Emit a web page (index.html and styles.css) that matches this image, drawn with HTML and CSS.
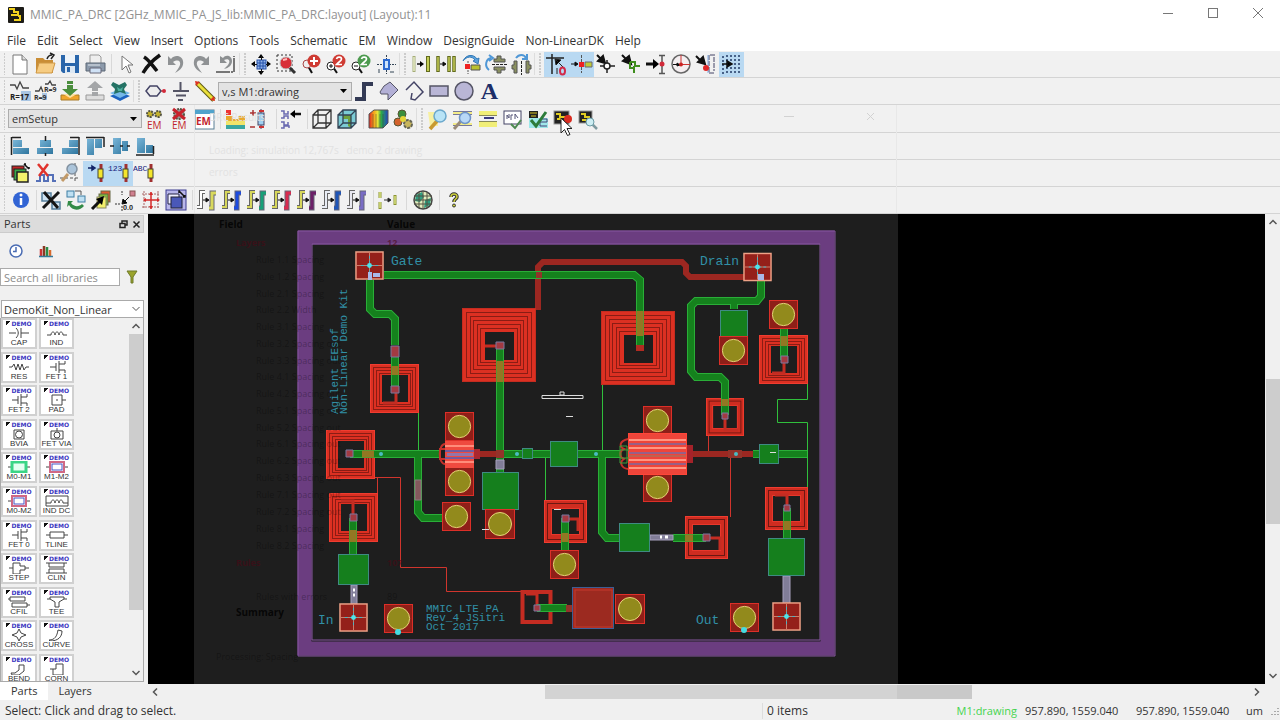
FILE: index.html
```html
<!DOCTYPE html>
<html lang="en">
<head>
<meta charset="utf-8">
<title>MMIC_PA_DRC [2GHz_MMIC_PA_JS_lib:MMIC_PA_DRC:layout] (Layout):11</title>
<link rel="stylesheet" href="styles.css">
</head>
<body>
<svg class="defs" aria-hidden="true">
<defs>
<linearGradient id="steel" x1="0" y1="0" x2="1" y2="1"><stop offset="0" stop-color="#7ab6d8"/><stop offset="1" stop-color="#2f769f"/></linearGradient>
<linearGradient id="rain"><stop offset="0" stop-color="#d22"/><stop offset=".25" stop-color="#f5a21b"/><stop offset=".45" stop-color="#e8e337"/><stop offset=".65" stop-color="#2aa84a"/><stop offset="1" stop-color="#2343c4"/></linearGradient>
<linearGradient id="navy"><stop offset="0" stop-color="#6d84c9"/><stop offset="1" stop-color="#101f58"/></linearGradient>
<symbol id="undo" viewBox="0 0 24 24"><path d="M4 4v9h8l-3-3c5-3 8-1 7 3-1 3-3 5-5 8 6-3 9-7 8-12-1-5-8-7-12-2z" fill="#8f9294"/></symbol>
<symbol id="swap" viewBox="0 0 24 24"><path d="M10 4H6v15H2" fill="none" stroke="#666" stroke-width="4"/><path d="M10 4H6v15H2" fill="none" stroke="var(--a)" stroke-width="2"/><path d="M21 5h-4v15h-3" fill="none" stroke="#667" stroke-width="5"/><path d="M21 5h-4v15h-3" fill="none" stroke="var(--b)" stroke-width="3"/><path d="M8 12h5M11 10l3 2-3 2z" stroke="#111" fill="#111"/></symbol>
<symbol id="comp" viewBox="0 0 24 24"><path d="M18 3v18" stroke="#a03030" stroke-width="3"/><rect x="15" y="8" width="5" height="9" fill="#f4e62c" stroke="#443"/></symbol>
<symbol id="bars" viewBox="0 0 24 24"><path d="M5 4v16" stroke="#a5ac78" stroke-width="3"/><path d="M19 4v16" stroke="#626b1c" stroke-width="4"/><path d="M5 5v14" stroke="#e6ebc4" stroke-width="1.500"/><path d="M19 5v14" stroke="#c3cc55" stroke-width="2"/><path d="M8 12h5" stroke="#111" stroke-width="1.500"/><path d="M11 9l4 3-4 3z"/></symbol>

<symbol id="sp74" viewBox="0 0 74 74"><path fill-rule="evenodd" d="M0 0h74v74H0zM23 24v28h29V24z" fill="#dc3022"/><g fill="none" stroke="#8a1c14" stroke-width="1"><rect x="4.500" y="4.500" width="65" height="65"/><rect x="8.500" y="8.500" width="57" height="57"/><rect x="11.500" y="12.500" width="50" height="49"/><rect x="15.500" y="16.500" width="43" height="41"/><rect x="18.500" y="20.500" width="37" height="34"/></g><rect x=".5" y=".5" width="73" height="73" fill="none" stroke="#c42c20"/></symbol>
<symbol id="sp49" viewBox="0 0 49 49"><path fill-rule="evenodd" d="M0 0h49v49H0zM12 11v27h26V11z" fill="#dc3022"/><g fill="none" stroke="#8a1c14"><rect x="3.500" y="3.500" width="42" height="42"/><rect x="6.500" y="6.500" width="36" height="36"/><rect x="9.500" y="9.500" width="31" height="31"/></g><rect x=".5" y=".5" width="48" height="48" fill="none" stroke="#f03c30"/></symbol>
<symbol id="sp43" viewBox="0 0 43 43"><path fill-rule="evenodd" d="M0 0h43v43H0zM8 9v25h27V9z" fill="#cf2c20"/><g fill="none" stroke="#6c1712"><rect x="3.500" y="3.500" width="36" height="36"/></g><rect x=".5" y=".5" width="42" height="42" fill="none" stroke="#f03c30"/><rect x="7.500" y="8.500" width="28" height="26" fill="none" stroke="#e8372b"/></symbol>
<symbol id="via" viewBox="0 0 30 30"><rect x=".5" y=".5" width="29" height="29" fill="#8f1f18" stroke="#e0302a"/><circle cx="15" cy="15" r="11.500" fill="#928a1c" stroke="#e8d67a"/></symbol>
<symbol id="pad" viewBox="0 0 30 30"><rect x="1" y="1" width="28" height="28" fill="#94201a" stroke="#efa287" stroke-width="1.500"/><path d="M15 2v26M2 15h26" stroke="#d0826e"/><path d="M15 5v20M6 15h18" stroke="#45b6c6" stroke-dasharray="3 2"/><circle cx="15" cy="15" r="2.500" fill="#4fe3ea"/></symbol>
</defs>
</svg>

<div class="window">
<header class="titlebar">
  <svg class="appicon" viewBox="0 0 16 16"><rect width="16" height="16" rx="1" fill="#1c1b17"/><path d="M1 2h5v3h5M3 8h7v-2M6 13h6V9h-2" fill="none" stroke="#f2d21f" stroke-width="2"/></svg>
  <h1>MMIC_PA_DRC [2GHz_MMIC_PA_JS_lib:MMIC_PA_DRC:layout] (Layout):11</h1>
  <button aria-label="Minimize"><svg viewBox="0 0 12 12"><path d="M1 6.500h10"/></svg></button>
  <button aria-label="Maximize"><svg viewBox="0 0 12 12"><rect x="1.500" y="1.500" width="9" height="9"/></svg></button>
  <button aria-label="Close"><svg viewBox="0 0 12 12"><path d="M1 1l10 10M11 1L1 11"/></svg></button>
</header>

<nav class="menubar">
  <button>File</button><button>Edit</button><button>Select</button><button>View</button><button>Insert</button><button>Options</button><button>Tools</button><button>Schematic</button><button>EM</button><button>Window</button><button>DesignGuide</button><button>Non-LinearDK</button><button>Help</button>
</nav>

<div class="toolbar" role="toolbar">
  <i class="grip"></i>
  <button aria-label="New"><svg viewBox="0 0 24 24"><path d="M5 3h9l5 5v14H5z" fill="#fff" stroke="#777"/><path d="M14 3v5h5" fill="#ddd" stroke="#777"/></svg></button>
  <button aria-label="Open"><svg viewBox="0 0 24 24"><path d="M3 6h7l2 2h8v13H3z" fill="#c98d35"/><path d="M6 11h16l-3 10H3z" fill="#f6cc82" stroke="#cf9845"/><path d="M14 7c1-3 3-4 5-4M17 1l4 2-3 4" fill="none" stroke="#222" stroke-width="1.500"/></svg></button>
  <button aria-label="Save"><svg viewBox="0 0 24 24"><path d="M3 3h18v18H5l-2-2z" fill="#2a66ab"/><rect x="7" y="3" width="10" height="8" fill="#eef4fa"/><rect x="7" y="14" width="10" height="7" fill="#dce8f4"/><rect x="9" y="15" width="3" height="5" fill="#2a66ab"/></svg></button>
  <button aria-label="Print"><svg viewBox="0 0 24 24"><path d="M7 3h9l2 2v7H7z" fill="#eee" stroke="#999"/><path d="M3 11h19v8H3z" fill="#8c9aab" stroke="#5b6674"/><path d="M7 16h11v5H7z" fill="#cfe1f5" stroke="#667"/><path d="M5 13h12" stroke="#dfe5ec"/></svg></button>
  <i class="sep"></i>
  <button aria-label="Select"><svg viewBox="0 0 24 24"><path d="M8 4v14l4-4 3 7 2-1-3-7h5z" fill="#fff" stroke="#777"/></svg></button>
  <button aria-label="Delete"><svg viewBox="0 0 24 24"><path d="M21 3C14 8 8 14 4 21M5 5c5 3 8 8 13 14" fill="none" stroke="#111" stroke-width="3.500"/></svg></button>
  <button aria-label="Undo"><svg><use href="#undo"/></svg></button>
  <button aria-label="Redo"><svg class="flip"><use href="#undo"/></svg></button>
  <button aria-label="Undo list"><svg viewBox="0 0 24 24"><path d="M6 4v7h7l-3-3c5-2 7 1 4 5l-4 4c5-1 8-4 8-8 0-5-6-7-9-3z" fill="#8c8f91"/><path d="M2 20h18V4" fill="none" stroke="#777" stroke-width="2" stroke-dasharray="14 1 2 1"/></svg></button>
  <i class="grip"></i>
  <button aria-label="View all"><svg viewBox="0 0 24 24"><rect x="8" y="8" width="9" height="9" fill="#8fb1e8" stroke="#2450a8"/><path d="M11 8v9M14 8v9M8 11h9M8 14h9" stroke="#2450a8"/><path d="M12 2l3 4h-6zM12 23l3-4h-6zM2 12l4-3v6zM22 12l-4-3v6z"/><path d="M12.500 4v4M12.500 17v4M4 12.500h4M17 12.500h4" stroke="#111"/></svg></button>
  <button aria-label="Zoom area"><svg viewBox="0 0 24 24"><rect x="3" y="3" width="15" height="16" fill="none" stroke="#333" stroke-dasharray="2 2"/><path d="M14 14l7 7" stroke="#333" stroke-width="3"/><circle cx="12" cy="11" r="6" fill="#d83038" stroke="#bbb"/><path d="M9 8l4-1" stroke="#fbb" stroke-width="2"/></svg></button>
  <button aria-label="Zoom in"><svg viewBox="0 0 24 24"><path d="M9 14l4 7" stroke="#111" stroke-width="2"/><circle cx="8" cy="12" r="4" fill="#eee" stroke="#a44"/><circle cx="15" cy="9" r="6.500" fill="#cf3b33"/><path d="M15 5v8M11 9h8" stroke="#fff" stroke-width="2"/></svg></button>
  <button aria-label="Zoom in 2x"><svg viewBox="0 0 24 24"><path d="M9 15l4 6" stroke="#111" stroke-width="2"/><circle cx="7" cy="14" r="4" fill="#fff" stroke="#222"/><path d="M5 14h4M7 12v4" stroke="#111"/><circle cx="15" cy="9" r="6.500" fill="#cf3b33"/><path d="M12.500 7c1-3 5-2 5 0s-3 3-5 5.500h5.500" fill="none" stroke="#fff" stroke-width="1.700"/></svg></button>
  <button aria-label="Zoom out 2x"><svg viewBox="0 0 24 24"><path d="M9 15l4 6" stroke="#111" stroke-width="2"/><circle cx="7" cy="14" r="4" fill="#fff" stroke="#222"/><path d="M5 14h4" stroke="#111"/><circle cx="15" cy="9" r="6.500" fill="#4c9a4e"/><path d="M12.500 7c1-3 5-2 5 0s-3 3-5 5.500h5.500" fill="none" stroke="#fff" stroke-width="1.700"/></svg></button>
  <button aria-label="Pan"><svg viewBox="0 0 24 24"><path d="M12.500 3v19M3 12.500h19" stroke="#345" stroke-dasharray="2 1"/><rect x="10" y="8" width="5" height="9" fill="#cfe3fa" stroke="#2d6ad0" stroke-width="2"/><path d="M5 17v4M16 20h4" stroke="#345"/></svg></button>
  <i class="grip"></i>
  <button aria-label="Route"><svg><use href="#bars"/></svg></button>
  <button aria-label="Multi route"><svg viewBox="0 0 24 24"><path d="M4 4v16M15 4v16M20 4v16" stroke="#626b1c" stroke-width="3.500"/><path d="M4 5v14M15 5v14M20 5v14" stroke="#c3cc55" stroke-width="1.500"/><path d="M6 12h5M9 10l3 2-3 2z" stroke="#111"/></svg></button>
  <button aria-label="Rotate"><svg viewBox="0 0 24 24"><path d="M4 9c3-7 11-7 14-2l2-1-1 6-5-3 2-1c-3-4-8-4-12 1z" fill="#5aa1dc" stroke="#3279b8"/><path d="M9 9v13" stroke="#555" stroke-dasharray="2 1"/><rect x="6" y="12" width="5" height="5" fill="#e22"/><path d="M12 13h9v5h-9z" fill="#b9c230" stroke="#555"/></svg></button>
  <button aria-label="Flip vertical"><svg viewBox="0 0 24 24"><path d="M5 18c-5-4-3-11 2-12M5 3l4 3-4 3" fill="none" stroke="#4f97d6" stroke-width="2"/><path d="M10 7h3V4h4v3h4v3H10zM10 15h11v3h-4v3h-4v-3h-3z" fill="#8a9060" stroke="#555"/><path d="M8 12.500h15" stroke="#222" stroke-dasharray="3 1"/></svg></button>
  <button aria-label="Flip horizontal"><svg viewBox="0 0 24 24"><path d="M7 6c3-4 8-4 10 0M18 2v5h-5" fill="none" stroke="#4f97d6" stroke-width="2"/><path d="M8 9v12H5v-4H3v-4h2V9zM17 9v12h3v-4h2v-4h-2V9z" fill="#8a9060" stroke="#555"/><path d="M12.500 9v14" stroke="#222" stroke-dasharray="3 1"/></svg></button>
  <i class="grip"></i>
  <button class="on" aria-label="Snap origin"><svg viewBox="0 0 24 24"><path d="M2 6h18M8 2v20" stroke="#222" stroke-width="1.500"/><path d="M19 15l-7-7M11 7l6 1-5 5z" stroke="#222"/><path d="M13 16v6" stroke="#222"/><ellipse cx="18.500" cy="19" rx="2.500" ry="3.500" fill="none" stroke="#d22a4a" stroke-width="2"/></svg></button>
  <button class="on" aria-label="Snap pin"><svg viewBox="0 0 24 24"><path d="M12.500 3v18" stroke="#555" stroke-dasharray="3 1"/><path d="M2 12h5M6 10l3 2-3 2z" stroke="#111"/><rect x="10" y="10" width="5" height="5" fill="#e22"/><path d="M16 10h7v5h-7z" fill="#bfca36" stroke="#667"/></svg></button>
  <button aria-label="Snap vertex"><svg viewBox="0 0 24 24"><path d="M3 3l6 6M11 11l-7-2 5-5z" fill="#111" stroke="#111" stroke-width="2"/><path d="M13 8v13M6 14h15" stroke="#222" stroke-width="1.500"/><circle cx="13" cy="14" r="3" fill="#fff" stroke="#222" stroke-width="1.500"/></svg></button>
  <button aria-label="Snap edge"><svg viewBox="0 0 24 24"><path d="M3 3l6 6M12 12l-8-3 6-5z" fill="#111" stroke="#111" stroke-width="2"/><path d="M11 10h5v4h5M11 10v6h4v5M15 14v3" fill="none" stroke="#3f8e1e" stroke-width="2"/></svg></button>
  <button aria-label="Snap line"><svg viewBox="0 0 24 24"><path d="M2 12h8" stroke="#111" stroke-width="3"/><path d="M9 7l6 5-6 5z"/><path d="M15 3.500h6M15 21.500h6M18 3v18" stroke="#555" stroke-width="1.500"/><circle cx="18" cy="12" r="2.500" fill="#d22a3a"/></svg></button>
  <button aria-label="Snap centre"><svg viewBox="0 0 24 24"><circle cx="12" cy="12" r="9" fill="#f4eef0" stroke="#666" stroke-width="1.500"/><path d="M12 3v10M12 12.500h9" stroke="#c33"/><path d="M4 12.500h5M8 11l3 2-3 1z" stroke="#111"/><circle cx="12" cy="12.500" r="2" fill="#c22"/></svg></button>
  <button aria-label="Snap intersection"><svg viewBox="0 0 24 24"><path d="M2 4l7 7M11 12l-7-2 5-5z" fill="#111" stroke="#111" stroke-width="2"/><path d="M21 3h-6v18h6M20 5v14" fill="none" stroke="#446" stroke-dasharray="5 1"/><path d="M14 3v18" stroke="#7fa8e0"/><circle cx="12" cy="16" r="3" fill="#e02828"/></svg></button>
  <button class="on" aria-label="Snap grid"><svg viewBox="0 0 24 24"><path d="M4 4v18M8 3v18M12 3v18M16 3v18M20 3v18" stroke="#223a66" stroke-width="1.500" stroke-dasharray="2 2"/><path d="M3 12h6M8 9l5 3-5 3z" stroke="#111" stroke-width="1.500"/></svg></button>
</div>

<div class="toolbar" role="toolbar">
  <i class="grip"></i>
  <button aria-label="Edit parameter"><svg viewBox="0 0 24 24"><path d="M2 6h5l2 4 3-7 3 6h6" fill="none" stroke="#444" stroke-width="1.300"/><rect x="13" y="12" width="10" height="10" fill="#a9c5e2"/><text x="2" y="21" class="i8">R=17</text></svg></button>
  <button aria-label="Swap parameter"><svg viewBox="0 0 24 24"><path d="M2 12h4l2-4 2 5M12 5h3l2-3 2 4h4" fill="none" stroke="#444" stroke-width="1.300"/><rect x="9" y="14" width="5" height="7" fill="#a9c5e2"/><text x="1" y="21" class="i6">R=9</text><text x="11" y="13" class="i6">R=9</text></svg></button>
  <button aria-label="Push into"><svg viewBox="0 0 24 24"><path d="M3 16h18v5H3z" fill="#f0a52c" stroke="#a87a28"/><path d="M5 15l7 4 7-4" fill="#ffe1a0"/><path d="M9 2h6v3H9zM9 6h6v4h5l-8 7-8-7h5z" fill="#4c8f3e"/></svg></button>
  <button aria-label="Pop out"><svg viewBox="0 0 24 24"><path d="M3 16h18v5H3z" fill="#ddd" stroke="#999"/><path d="M12 2l8 7h-5v3H9V9H4zM9 13h6v4H9z" fill="#a4a6a8"/></svg></button>
  <button aria-label="Hierarchy"><svg viewBox="0 0 24 24"><path d="M2 17l10-4 10 4-10 5z" fill="#1c63c0"/><path d="M2 14l10-4 10 4-10 5z" fill="#75b8e8"/><path d="M5 3l6 3 6-3 2 3-3 4 2 5-6-2-6 2 1-5-4-4z" fill="#247264"/><path d="M9 8l3 2 3-2-1 4h-4z" fill="#4fb0a0"/></svg></button>
  <i class="grip"></i>
  <button aria-label="Pin"><svg viewBox="0 0 24 24"><path d="M7 7h7l4 5-4 5H7l-4-5z" fill="#eee" stroke="#446" stroke-width="1.500"/><path d="M18 12h4" stroke="#a33"/><circle cx="21" cy="12" r="2" fill="#d22a3a"/></svg></button>
  <button aria-label="Ground"><svg viewBox="0 0 24 24"><path d="M12.500 3v9M5 12h16M8 16.500h10M10 21h5" stroke="#556" stroke-width="2"/></svg></button>
  <button aria-label="Wire"><svg viewBox="0 0 24 24"><path d="M4 4l17 17" stroke="#5d5a12" stroke-width="5"/><path d="M4 4l17 17" stroke="#eadf3a" stroke-width="3"/><path d="M2 2l5 1-4 4zM22 22l-5-1 4-4z" fill="#d32"/></svg></button>
  <select class="layer" aria-label="Drawing layer"><option>v,s M1:drawing</option></select>
  <button aria-label="Path"><svg viewBox="0 0 24 24"><path d="M3 20h9V5h9" fill="none" stroke="#333a55" stroke-width="4"/></svg></button>
  <button aria-label="Polygon"><svg viewBox="0 0 24 24"><path d="M7 7l6-4 8 8-10 10v-6H4l-1-2z" fill="#b3b0d6" stroke="#556"/></svg></button>
  <button aria-label="Polyline"><svg viewBox="0 0 24 24"><path d="M4 11l8-8 9 10-8 8-4-1 1-6" fill="none" stroke="#446" stroke-width="1.500"/></svg></button>
  <button aria-label="Rectangle"><svg viewBox="0 0 24 24"><rect x="3" y="7" width="18" height="10" fill="#b9b6d6" stroke="#556" stroke-width="1.500"/></svg></button>
  <button aria-label="Circle"><svg viewBox="0 0 24 24"><circle cx="12" cy="12" r="9" fill="#b9b6d6" stroke="#556" stroke-width="1.500"/></svg></button>
  <button class="glyph" aria-label="Text">A</button>
</div>

<div class="toolbar tall" role="toolbar">
  <i class="grip"></i>
  <select class="layer" aria-label="EM setup"><option>emSetup</option></select>
  <button aria-label="EM setup editor"><svg viewBox="0 0 24 24"><circle cx="8" cy="7" r="3" fill="#c5b32a" stroke="#554" stroke-dasharray="2 1" stroke-width="2"/><circle cx="16" cy="7" r="3" fill="#c5b32a" stroke="#554" stroke-dasharray="2 1" stroke-width="2"/><text x="5" y="22" class="em">EM</text></svg></button>
  <button aria-label="Delete EM setup"><svg viewBox="0 0 24 24"><circle cx="12" cy="7" r="5" fill="#999" stroke="#554" stroke-dasharray="2 1" stroke-width="2"/><path d="M6 2l12 10M18 2L6 12" stroke="#c8222c" stroke-width="3"/><text x="5" y="22" class="em">EM</text></svg></button>
  <button aria-label="EM simulate"><svg viewBox="0 0 24 24"><rect x="3" y="3" width="19" height="19" fill="#fff" stroke="#5a7f95"/><rect x="3" y="3" width="19" height="4" fill="#4fa3cc"/><text x="4" y="18" class="em b">EM</text></svg></button>
  <i class="sep"></i>
  <button aria-label="Substrate"><svg viewBox="0 0 24 24"><rect x="3" y="3" width="5" height="5" fill="#e33"/><path d="M3 9h7v3h5V9h7v5H3z" fill="#e9a82c"/><rect x="3" y="14" width="19" height="4" fill="#f1e46a"/><rect x="3" y="18" width="19" height="4" fill="#3aa6a0"/></svg></button>
  <button aria-label="Ports"><svg viewBox="0 0 24 24"><path d="M5 3v6M2 6h6M2 20h5" stroke="#a33" stroke-width="1.500"/><path d="M13 2v20" stroke="#446"/><rect x="10" y="6" width="6" height="12" fill="#9fd0f0" stroke="#446"/><path d="M11 4h5M11 20h5" stroke="#c33" stroke-width="2"/></svg></button>
  <i class="sep"></i>
  <button aria-label="Component"><svg viewBox="0 0 24 24"><path d="M2 4h3v3h4V4M2 11h3V9h4v3M2 15h3v3h4v-3M2 21h3v-2h5v2" fill="none" stroke="#6a6ab0" stroke-width="1.500"/><path d="M14 7h8" stroke="#111" stroke-width="2.500"/><path d="M11 7l5-4v8z"/></svg></button>
  <i class="sep"></i>
  <button aria-label="3D view"><svg viewBox="0 0 24 24"><path d="M3 8h13v13H3zM8 3h13v13H8zM3 8l5-5M16 8l5-5M16 21l5-5M3 21l5-5" fill="none" stroke="#333" stroke-width="1.300"/></svg></button>
  <button aria-label="3D solid view"><svg viewBox="0 0 24 24"><path d="M3 8l5-5h13v13l-5 5H3z" fill="#7ccbd4"/><path d="M8 8h8v13l-3-2V12H8z" fill="#6fa23c"/><path d="M3 8h13v13H3zM8 3h13v13H8zM3 8l5-5M16 8l5-5M16 21l5-5M3 21l5-5" fill="none" stroke="#345" stroke-width="1.300"/></svg></button>
  <i class="sep"></i>
  <button aria-label="Far field"><svg viewBox="0 0 24 24"><path d="M3 7l5-4h14v13l-5 5H3z" fill="url(#rain)" stroke="#555"/><path d="M7 7v14M10 7v14M14 7v14M17 7v14" stroke="#333" stroke-opacity=".4"/></svg></button>
  <button aria-label="EM visualisation"><svg viewBox="0 0 24 24"><circle cx="11" cy="7" r="4" fill="#3b8f3d" stroke="#553"/><circle cx="7" cy="15" r="4" fill="#d3622c" stroke="#553"/><circle cx="17" cy="17" r="4" fill="#c8b65c" stroke="#665" stroke-dasharray="3 1" stroke-width="2"/><circle cx="12" cy="12" r="3" fill="#e5d53a"/></svg></button>
  <i class="grip"></i>
  <button aria-label="Find"><svg viewBox="0 0 24 24"><path d="M2 5h10v14H4z" fill="#f7f0a0"/><path d="M11 14l-7 8" stroke="#c89a30" stroke-width="3.500"/><circle cx="14" cy="9" r="6" fill="#b8e3f6" stroke="#6ba8cc" stroke-width="1.500"/></svg></button>
  <button aria-label="Find layer"><svg viewBox="0 0 24 24"><path d="M2 4h19v3H2zM2 16h19v3H2z" fill="#f3ec8a"/><path d="M2 4.500h19M2 7.500h19M2 18.500h19" stroke="#779"/><path d="M10 14l-7 8" stroke="#998a78" stroke-width="3"/><circle cx="14" cy="11" r="5.500" fill="#b8d8f6" stroke="#6f95c8" stroke-width="1.500"/></svg></button>
  <button aria-label="Layer spacing"><svg viewBox="0 0 24 24"><path d="M3 4h18v4H3zM3 15h18v5H3z" fill="#f1ee78"/><path d="M3 8.500h18M3 14.500h18" stroke="#88895a"/><rect x="8" y="10" width="10" height="2" fill="#393a80"/></svg></button>
  <button aria-label="Check"><svg viewBox="0 0 24 24"><rect x="3" y="4" width="17" height="13" fill="#fff" stroke="#446"/><path d="M6 12V8l2 3V7M10 13V8h2M14 12V7l3 4" fill="none" stroke="#557"/><path d="M10 17l4 4 6-8" fill="none" stroke="#4d8a50" stroke-width="2"/></svg></button>
  <button aria-label="Connectivity check"><svg viewBox="0 0 24 24"><rect x="3" y="4" width="9" height="7" fill="#222"/><rect x="3" y="11" width="19" height="10" fill="#9fe8ea"/><path d="M4 6h7M5 9h5" stroke="#d9c422"/><path d="M14 12h7v3h-7v4h7" fill="none" stroke="#447"/><path d="M5 13l5 6L20 5" fill="none" stroke="#2d7c3a" stroke-width="3"/></svg></button>
  <button aria-label="Run DRC"><svg viewBox="0 0 24 24"><rect x="3" y="4" width="15" height="13" fill="#222" stroke="#999"/><path d="M5 7h4v3h5M6 12h4" stroke="#e0cc22" stroke-width="2" fill="none"/><circle cx="17" cy="12" r="4" fill="#d92c20"/></svg></button>
  <button aria-label="DRC results"><svg viewBox="0 0 24 24"><rect x="3" y="4" width="13" height="12" fill="#222" stroke="#999"/><path d="M5 7h4v3h5M6 13h4" stroke="#e0cc22" stroke-width="2" fill="none"/><path d="M16 17l5 5" stroke="#7f9aa0" stroke-width="2.500"/><circle cx="14" cy="15" r="4" fill="#cdeef3" stroke="#6a9ba5"/></svg></button>
</div>

<div class="toolbar" role="toolbar">
  <i class="grip"></i>
  <button aria-label="Align left"><svg viewBox="0 0 24 24"><path d="M3.500 3v18M4 3.500h9" stroke="#222" stroke-width="1.500"/><path d="M5 6h9v7H5zM5 14h16v6H5z" fill="url(#steel)"/></svg></button>
  <button aria-label="Align centre"><svg viewBox="0 0 24 24"><path d="M7 6h11v7H7zM4 14h16v6H4z" fill="url(#steel)"/><path d="M12.500 2v5M12.500 19v3" stroke="#222" stroke-width="1.500"/></svg></button>
  <button aria-label="Align right"><svg viewBox="0 0 24 24"><path d="M21 3v18M12 3.500h9" stroke="#222" stroke-width="1.500"/><path d="M11 6h9v7h-9zM4 14h16v6H4z" fill="url(#steel)"/></svg></button>
  <button aria-label="Align top"><svg viewBox="0 0 24 24"><path d="M3 3.500h18M21 3v10" stroke="#222" stroke-width="1.500"/><path d="M4 5h7v16H4zM12 5h7v9h-7z" fill="url(#steel)"/></svg></button>
  <button aria-label="Align middle"><svg viewBox="0 0 24 24"><path d="M5 4h8v16H5zM14 7h6v10h-6z" fill="url(#steel)"/><path d="M2 12h4M12 12h3M19 12h3" stroke="#222" stroke-width="1.500"/></svg></button>
  <button aria-label="Align bottom"><svg viewBox="0 0 24 24"><path d="M4 4h8v15H4zM13 11h7v8h-7z" fill="url(#steel)"/><path d="M3 21h18M20.500 12v8" stroke="#222" stroke-width="1.500"/></svg></button>
</div>

<div class="toolbar" role="toolbar">
  <i class="grip"></i>
  <button aria-label="Layer stack"><svg viewBox="0 0 24 24"><rect x="4" y="5" width="12" height="11" fill="#c02828" stroke="#222"/><rect x="6" y="8" width="12" height="11" fill="#3aa84a" stroke="#222"/><rect x="9" y="11" width="11" height="10" fill="#f3f26c" stroke="#222" stroke-width="1.500"/><path d="M16 3l5 5M16 3h2M21 8V6" stroke="#111" stroke-width="1.500"/></svg></button>
  <button aria-label="Remove trace"><svg viewBox="0 0 24 24"><path d="M3 20h4v-6h4v6h4v-6h5v6h3" fill="none" stroke="#5570b8" stroke-width="2"/><path d="M5 3l10 12M15 3L6 15" stroke="#e0332c" stroke-width="2.500"/></svg></button>
  <button aria-label="Inspect"><svg viewBox="0 0 24 24"><path d="M2 17h20M17 2v20" stroke="#555" stroke-dasharray="3 2"/><path d="M10 13l-6 7" stroke="#c29a68" stroke-width="3"/><circle cx="14" cy="8" r="5" fill="#abc4da" stroke="#8291a0" stroke-width="1.500"/></svg></button>
  <button class="on" aria-label="Move pins"><svg viewBox="0 0 24 24"><use href="#comp"/><path d="M5 7h5M9 5l3 2-3 2z" fill="#126" stroke="#126" stroke-width="1.500"/></svg></button>
  <button class="on" aria-label="Number pins"><svg viewBox="0 0 24 24"><use href="#comp"/><text x="0" y="10" class="pin">123</text></svg></button>
  <button aria-label="Name pins"><svg viewBox="0 0 24 24"><use href="#comp"/><text x="0" y="10" class="pin">ABC</text></svg></button>
</div>

<div class="toolbar" role="toolbar">
  <i class="grip"></i>
  <button aria-label="Information"><svg viewBox="0 0 24 24"><circle cx="13" cy="12" r="8" fill="#3164d4"/><path d="M13 10v7" stroke="#fff" stroke-width="2.500"/><circle cx="13" cy="7" r="1.500" fill="#fff"/></svg></button>
  <i class="sep"></i>
  <button aria-label="Disconnect"><svg viewBox="0 0 24 24"><path d="M3 5h9v8H3zM13 14h8v7h-8z" fill="#cfe3f2" stroke="#567f9c" stroke-width="1.500"/><path d="M5 4l14 16M20 4L4 20" stroke="#151515" stroke-width="3"/></svg></button>
  <button aria-label="Replace"><svg viewBox="0 0 24 24"><rect x="3" y="3" width="7" height="6" fill="#bfe0f2" stroke="#3f7fa4"/><rect x="14" y="8" width="7" height="6" fill="#bfe0f2" stroke="#3f7fa4"/><path d="M4 13h5l-2 2c3 4 8 4 11 1l2 2c-4 5-12 5-15-1l-2 2z" fill="#328a46"/><path d="M11 3h6v4" fill="none" stroke="#555"/></svg></button>
  <button aria-label="Copy layers"><svg viewBox="0 0 24 24"><rect x="12" y="3" width="9" height="11" fill="#e05c30" stroke="#664"/><rect x="10" y="6" width="9" height="11" fill="#7fb83a" stroke="#664"/><rect x="8" y="9" width="9" height="11" fill="#f3f06a" stroke="#886"/><path d="M3 21l9-9" stroke="#111" stroke-width="3"/><path d="M15 8l-2 9-6-6z"/></svg></button>
  <button aria-label="Set origin"><svg viewBox="0 0 24 24"><rect x="16" y="3" width="5" height="5" fill="#d08090" stroke="#855"/><path d="M15 9l-6 6M8 16l1-5 4 4z" stroke="#111"/><path d="M8 3v4M8 18v5M1 16h5" stroke="#333" stroke-dasharray="2 1"/><text x="9" y="22" class="i6">0.0</text></svg></button>
  <button aria-label="Scale"><svg viewBox="0 0 24 24"><path d="M3 6h18M3 19h18M5 3v18M19 3v18" stroke="#a66" stroke-dasharray="2 1"/><path d="M12 4v17M5 12h15" stroke="#d42a2a" stroke-width="1.500"/><path d="M12 4l2 3h-4zM12 21l2-3h-4zM4 12l3-2v4zM21 12l-3-2v4z" fill="#d42a2a"/></svg></button>
  <button aria-label="Resize"><svg viewBox="0 0 24 24"><rect x="2" y="2" width="20" height="20" fill="#b9b7ea" stroke="#3a3a90"/><path d="M4 6h11v10H4z" fill="#eef" stroke="#224"/><rect x="7" y="9" width="11" height="11" fill="#4a58b8" stroke="#223"/><path d="M15 3l6 6M16 3h-1v2M21 7v2h-2" stroke="#111" stroke-width="1.500"/></svg></button>
  <i class="sep"></i>
  <button class="sw0" aria-label="Swap none"><svg><use href="#swap"/></svg></button>
  <button class="sw1" aria-label="Swap blue"><svg><use href="#swap"/></svg></button>
  <button class="sw2" aria-label="Swap green"><svg><use href="#swap"/></svg></button>
  <button class="sw3" aria-label="Swap red"><svg><use href="#swap"/></svg></button>
  <button class="sw4" aria-label="Swap plum"><svg><use href="#swap"/></svg></button>
  <button class="sw5" aria-label="Swap navy"><svg><use href="#swap"/></svg></button>
  <button class="sw6" aria-label="Swap violet"><svg><use href="#swap"/></svg></button>
  <i class="sep"></i>
  <button aria-label="Transfer"><svg viewBox="0 0 24 24"><path d="M4 4v6M4 14v7M19 7v10" stroke="#8b9433" stroke-width="3"/><path d="M4 4v6M4 14v6M19 8v8" stroke="#d8df80" stroke-width="1.500"/><path d="M8 12h5M12 10l3 2-3 2z" stroke="#333"/></svg></button>
  <i class="sep wide"></i>
  <button aria-label="Web"><svg viewBox="0 0 24 24"><circle cx="12" cy="12" r="9" fill="#e2edbe" stroke="#444" stroke-width="1.500"/><path d="M5 7l6-3 2 5-4 5-5-1zM14 12l6-2-1 7-6 3z" fill="#2e9d80"/><path d="M3 8h18M3 12h18M3 16h18M8 4v16M12 3v18M16 4v16" stroke="#554" stroke-width="1"/></svg></button>
  <i class="sep"></i>
  <button aria-label="Help"><svg viewBox="0 0 24 24"><path d="M9 9c0-4 6-4 6 0 0 2-3 2-3 5" fill="none" stroke="#333" stroke-width="3.500"/><path d="M9 9c0-4 6-4 6 0 0 2-3 2-3 5" fill="none" stroke="#c9cc3a" stroke-width="1.500"/><circle cx="12" cy="17.500" r="1.500" fill="#c9cc3a" stroke="#333"/></svg></button>
</div>

<main class="workspace">
<aside class="dock">
  <div class="dockhead"><h2>Parts</h2>
    <button aria-label="Float"><svg viewBox="0 0 9 9"><path d="M3 3V1h5v4H6M1 3.500h5v4H1z" fill="none" stroke="#222" stroke-width="1.500"/></svg></button>
    <button aria-label="Close"><svg viewBox="0 0 9 9"><path d="M1.500 1.500l6 6M7.500 1.500l-6 6" stroke="#222" stroke-width="1.500"/></svg></button>
  </div>
  <div class="dockicons">
    <button aria-label="Recent"><svg viewBox="0 0 16 16"><circle cx="8" cy="8" r="6" fill="#fff" stroke="#4a6cb3" stroke-width="1.500"/><path d="M8 4v4.500H5" fill="none" stroke="#4a6cb3" stroke-width="1.500"/></svg></button>
    <button aria-label="Libraries"><svg viewBox="0 0 16 16"><path d="M3 6v7" stroke="#c33" stroke-width="2.500"/><path d="M6 3v10" stroke="#8a3a24" stroke-width="2.500"/><path d="M9 4v9" stroke="#2c8a45" stroke-width="2.500"/><path d="M12 7v6" stroke="#d76a2c" stroke-width="2.500"/><path d="M1 13.500h14" stroke="#357a9a" stroke-width="1.500"/></svg></button>
  </div>
  <div class="searchrow"><input type="text" placeholder="Search all libraries" aria-label="Search all libraries">
    <button aria-label="Filter"><svg viewBox="0 0 12 14"><path d="M1 1h10L7 7v6H5V7z" fill="#9aa32c" stroke="#6f7a2a"/></svg></button></div>
  <div class="libbox"><select aria-label="Library"><option>DemoKit_Non_Linear</option></select><svg viewBox="0 0 8 6"><path d="M0.500 1l3.500 3.500L7.500 1" fill="none" stroke="#555"/></svg></div>
  <div class="partspane">
    <div class="parts">
      <button><b>DEMO</b><svg viewBox="0 0 24 12"><path d="M2 6h7M9 1c3 3 3 7 0 10M14 1v10M14 6h8"/></svg><span>CAP</span></button>
      <button><b>DEMO</b><svg viewBox="0 0 24 12"><path d="M2 8h4c0-4 4-4 4 0 0-4 4-4 4 0 0-4 4-4 4 0h4"/></svg><span>IND</span></button>
      <button><b>DEMO</b><svg viewBox="0 0 24 12"><path d="M2 6h3l2-3 2 6 2-6 2 6 2-6 2 6 2-3h3"/></svg><span>RES</span></button>
      <button><b>DEMO</b><svg viewBox="0 0 24 12"><path d="M5 6h6M11 2v8M14 0v12M14 3h6V0M14 9h6v3"/></svg><span>FET 1</span></button>
      <button><b>DEMO</b><svg viewBox="0 0 24 12"><path d="M5 6h6M11 2v8M14 0v12M14 3h6V0M14 9h6v3"/></svg><span>FET 2</span></button>
      <button><b>DEMO</b><svg viewBox="0 0 24 12"><path d="M7 1h10v10H7zM17 6h4M12 5v2"/></svg><span>PAD</span></button>
      <button><b>DEMO</b><svg viewBox="0 0 24 12"><path d="M7 2h10v9H7z"/><circle cx="12" cy="6.500" r="3.500"/></svg><span>BVIA</span></button>
      <button><b>DEMO</b><svg viewBox="0 0 24 12"><path d="M6 3h12v8H6zM12 0v3"/><circle cx="12" cy="7" r="3"/></svg><span>FET VIA</span></button>
      <button><b>DEMO</b><svg viewBox="0 0 24 12"><path d="M1 6h22"/><rect x="5" y="1" width="14" height="10" class="m0"/></svg><span>M0-M1</span></button>
      <button><b>DEMO</b><svg viewBox="0 0 24 12"><path d="M1 6h22"/><rect x="5" y="1" width="14" height="10" class="m1"/><rect x="7" y="3" width="10" height="6" class="m2"/></svg><span>M1-M2</span></button>
      <button><b>DEMO</b><svg viewBox="0 0 24 12"><path d="M1 6h22"/><rect x="5" y="1" width="14" height="10" class="m1"/><rect x="7" y="3" width="10" height="6" class="m2"/></svg><span>M0-M2</span></button>
      <button><b>DEMO</b><svg viewBox="0 0 24 12"><path d="M1 1h22v10H1zM1 8h5c0-4 4-4 4 0 0-4 4-4 4 0 0-4 4-4 4 0h5"/></svg><span>IND DC</span></button>
      <button><b>DEMO</b><svg viewBox="0 0 24 12"><path d="M5 6h6M11 2v8M14 0v12M14 3h6V0M14 9h6v3"/></svg><span>FET 0</span></button>
      <button><b>DEMO</b><svg viewBox="0 0 24 12"><path d="M1 6h4M19 6h4M5 3h14v6H5z"/></svg><span>TLINE</span></button>
      <button><b>DEMO</b><svg viewBox="0 0 24 12"><path d="M2 6h4V1h7v3h5v4h-5v4H6V6M18 6h4"/></svg><span>STEP</span></button>
      <button><b>DEMO</b><svg viewBox="0 0 24 12"><path d="M4 1h15v4H4zM4 7h15v4H4zM1 1h3M19 1h3M1 11h3M19 11h3"/></svg><span>CLIN</span></button>
      <button><b>DEMO</b><svg viewBox="0 0 24 12"><path d="M3 1h15v4H3zM5 7h15v4H5zM1 3h2M20 9h3"/></svg><span>CFIL</span></button>
      <button><b>DEMO</b><svg viewBox="0 0 24 12"><path d="M2 3h3V1h14v2h3M5 3l5 3v5h4V6l5-3"/></svg><span>TEE</span></button>
      <button><b>DEMO</b><svg viewBox="0 0 24 12"><path d="M12 0l2 4 5 2-5 2-2 4-2-4-5-2 5-2z"/></svg><span>CROSS</span></button>
      <button><b>DEMO</b><svg viewBox="0 0 24 12"><path d="M4 11c6 0 8-4 9-10l4 1c0 6-4 10-12 10z"/></svg><span>CURVE</span></button>
      <button><b>DEMO</b><svg viewBox="0 0 24 12"><path d="M4 10h4l4-3V2h5v6l-5 4H5z"/></svg><span>BEND</span></button>
      <button><b>DEMO</b><svg viewBox="0 0 24 12"><path d="M5 6h6V1h7v11H8V6"/></svg><span>CORN</span></button>
    </div>
    <div class="vscroll"><svg viewBox="0 0 8 6"><path d="M.5 5L4 1.500 7.500 5"/></svg><i class="partthumb"></i><svg viewBox="0 0 8 6"><path d="M.5 1L4 4.500 7.500 1"/></svg></div>
  </div>
  <div class="tabs" role="tablist"><button role="tab" aria-selected="true">Parts</button><button role="tab" aria-selected="false">Layers</button></div>
</aside>

<section class="view">
  <div class="canvas">
  <svg class="board" viewBox="148 214 1117 470" aria-label="Layout">
    <rect x="194" y="214" width="704" height="470" fill="#1e1e1e"/>
    <rect x="304.500" y="237.500" width="523" height="411" fill="none" stroke="#6b3d80" stroke-width="14"/>
    <path d="M298 231h537v425H298zM312 244h508v396H312z" fill="none" stroke="#86569f" stroke-width="1"/>
    <g class="thin"><path d="M418.500 413V450M602.500 385V450M545.500 457V502M807.500 384V399.500H777.500V422.500H807.500V487"/></g>
    <g class="thinred"><path d="M375 477.500H400.500V567.500H446.500V591.500H522M377.500 478V495M730.500 457V517M708.500 434V454"/></g>
    <path d="M538 310V267L543 262H682L686 266V273L690 277H745M474 454H502M687 454H753" fill="none" stroke="#9c2721" stroke-width="6"/>

    <use href="#sp74" x="462" y="308" width="74" height="74"/>
    <use href="#sp74" x="601" y="311" width="74" height="74"/>
    <use href="#sp49" x="370" y="364" width="49" height="49"/>
    <use href="#sp49" x="326" y="430" width="49" height="49"/>
    <use href="#sp49" x="329" y="493" width="49" height="49"/>
    <use href="#sp49" x="759" y="335" width="49" height="49"/>
    <use href="#sp43" x="544" y="500" width="43" height="43"/>
    <use href="#sp43" x="685" y="516" width="43" height="43"/>
    <use href="#sp43" x="765" y="487" width="43" height="43"/>
    <use href="#sp43" x="706" y="398" width="38" height="38"/>
    <rect x="522.500" y="592" width="28" height="30" fill="none" stroke="#c42c22" stroke-width="4"/>
    <g fill="none" stroke="#c42c22" stroke-width="3"><path d="M485 346H498M396 390V403H383M353 520V501H341M784 360V373H772M565 519H578V531M708 538H720V550M787 508V495H775M537 608V594H526M725 415V430H738"/></g>

    <g fill="none" stroke="#2aae38" stroke-width="8"><path d="M384 275H634L640 280V351M370 280V309L375 314H390L395 319V345M395 357V390M761 281V296L757 301H696L691 306V371L696 377H720L725 382V415M734 301V309M500 345V472M350 454H440M418 454V512L423 518H442M353 518V554M502 454H552M577 454H622M602 454V532L607 538H619M673 538H706M565 518V550M784 329V360M787 508V538M753 454H759M779 454H807M537 608H567"/></g>
    <g fill="none" stroke="#15811d" stroke-width="6"><path d="M384 275H634L640 280V351M370 280V309L375 314H390L395 319V345M395 357V390M761 281V296L757 301H696L691 306V371L696 377H720L725 382V415M734 301V309M500 345V472M350 454H440M418 454V512L423 518H442M353 518V554M502 454H552M577 454H622M602 454V532L607 538H619M673 538H706M565 518V550M784 329V360M787 508V538M753 454H759M779 454H807M537 608H567"/></g>
    <g fill="none" stroke="#a97624" stroke-width="7" stroke-opacity=".85"><path d="M500 361V382M640 311V336M395 366V375M362 454H374M353 530V542M784 336V346M787 521V530M565 533V542M685 538H693M725 399V406"/></g>
    <g fill="#a33a42" stroke="#7a78a0"><path d="M391 346h8v11h-8zM391 386h8v7h-8zM496 342h8v7h-8zM346 450h7v7h-7zM350 514h7v7h-7zM781 356h7v7h-7zM722 413h6v6h-6zM562 515h7v7h-7zM703 534h7v7h-7zM784 505h6v6h-6zM534 605h6v6h-6z"/></g>
    <path d="M636 345h8v6h-8z" fill="#b12b22"/>
    <path d="M496 450h8v8h-8zM536 272h6v6h-6zM728 450h14v8h-14zM566 605h7v7h-7z" fill="#93332a"/>
    <path d="M415 480h6v20h-6z" fill="#84585c" stroke="#8b7d80"/>
    <path d="M351 585h6v19h-6zM783 576h7v28h-7zM650 535h23v5h-23zM496 460h8v9h-8z" fill="#817d98" stroke="#a7a1bd"/>
    <path d="M353 590h2M353 595h2M660 537h2M665 537h3" stroke="#fff" stroke-width="3"/>
    <g fill="#4bbcc2"><circle cx="381" cy="454" r="2"/><circle cx="517" cy="454" r="2"/><circle cx="596" cy="454" r="2"/><circle cx="736" cy="454" r="2"/></g>

    <g fill="#157f1d" stroke="#3f8a83"><rect x="720.500" y="310.500" width="27" height="26"/><rect x="482.500" y="472.500" width="36" height="37"/><rect x="550.500" y="441.500" width="27" height="25"/><rect x="522.500" y="448.500" width="10" height="10"/><rect x="338.500" y="554.500" width="30" height="30"/><rect x="619.500" y="523.500" width="30" height="28"/><rect x="759.500" y="444.500" width="19" height="19"/><rect x="768.500" y="538.500" width="36" height="37"/></g>
    <rect x="572.500" y="587.500" width="41" height="41" fill="#9c2a20" stroke="#3e5d94"/>
    <rect x="575" y="590" width="37" height="37" fill="none" stroke="#c5382c"/>

    <use href="#via" x="719" y="336" width="29" height="29"/>
    <use href="#via" x="769" y="300" width="29" height="29"/>
    <use href="#via" x="445" y="412" width="29" height="29"/>
    <use href="#via" x="445" y="467" width="29" height="29"/>
    <use href="#via" x="442" y="502" width="29" height="29"/>
    <use href="#via" x="485" y="509" width="30" height="30"/>
    <use href="#via" x="550" y="550" width="29" height="29"/>
    <use href="#via" x="643" y="406" width="29" height="29"/>
    <use href="#via" x="643" y="473" width="29" height="29"/>
    <use href="#via" x="384" y="604" width="29" height="29"/>
    <use href="#via" x="730" y="603" width="29" height="29"/>
    <use href="#via" x="615" y="594" width="30" height="30"/>
    <g fill="#45dbe1"><circle cx="398" cy="632" r="3"/><circle cx="744" cy="630" r="3"/></g>

    <path d="M445 444c-7 0-7 20 0 20M445 449h-5v10h5" fill="none" stroke="#c5302a" stroke-width="2"/>
    <rect x="445" y="441" width="29" height="27" fill="#ef4a3f"/>
    <path d="M445 446h29M445 462h29" stroke="#ff8c7a" stroke-width="2"/><path d="M445 451h29M445 458h29" stroke="#755b9c" stroke-width="2"/><path d="M447 454.500h26" stroke="#9474a8" stroke-width="3"/>
    <rect x="474" y="449" width="6" height="10" fill="#aa2830"/>
    <rect x="628.500" y="433.500" width="58" height="41" fill="#ee453a" stroke="#ff4638"/>
    <path d="M629 440h57M629 448h57M629 460h57M629 468h57" stroke="#ff9582" stroke-width="2"/><path d="M629 444h57M629 453h57M629 464h57" stroke="#986087" stroke-width="2"/><path d="M629 456h57" stroke="#8d8066" stroke-width="1"/>
    <path d="M628 439c-9 2-9 8-4 10-5 2-5 8 0 10-5 3-3 9 4 10" fill="none" stroke="#c5302a" stroke-width="2"/><path d="M620 446h7v17h-7zM620 450h9M620 458h9" fill="none" stroke="#3aa33a"/>
    <rect x="687" y="445" width="6" height="18" fill="#a52229"/>

    <use href="#pad" x="355" y="251" width="29" height="29"/>
    <use href="#pad" x="743" y="252" width="29" height="30"/>
    <use href="#pad" x="339" y="603" width="29" height="29"/>
    <use href="#pad" x="772" y="602" width="29" height="29"/>
    <path d="M368 272h4v8h-4zM373 273h7v4h-7zM758 274h6v6h-6z" fill="#aab9e8"/>
    <path d="M542 395.500h41v3H542zM560 392h4v3h-4zM566 416.500h7M482 529.500h7M554 509.500h7M770 452.500h6" fill="none" stroke="#ddd"/>
    <g class="etch"><text x="391" y="265" class="lg">Gate</text><text x="700" y="265" class="lg">Drain</text><text x="318" y="624" class="lg">In</text><text x="696" y="624" class="lg">Out</text><text x="426" y="612">MMIC LTE PA</text><text x="426" y="621">Rev_4 JSitri</text><text x="426" y="630">Oct 2017</text><text transform="translate(338 414) rotate(-90)">Agilent EEsof</text><text transform="translate(347 414) rotate(-90)">Non-Linear Demo Kit</text></g>

    <g class="ghost">
      <text x="219" y="228" class="gb">Field</text><text x="387" y="228" class="gb">Value</text>
      <text x="236" y="246" class="gr">Layers</text><text x="387" y="246" class="gr">12</text>
      <text x="256" y="263">Rule 1.1 Spacing</text><text x="256" y="280">Rule 1.2 Spacing</text><text x="256" y="297">Rule 2.1 Spacing</text><text x="256" y="313">Rule 2.2 Width</text><text x="256" y="330">Rule 3.1 Spacing</text><text x="256" y="347">Rule 3.2 Spacing out</text><text x="256" y="364">Rule 3.3 Spacing out</text><text x="256" y="380">Rule 4.1 Spacing</text><text x="256" y="397">Rule 4.2 Spacing out</text><text x="256" y="414">Rule 5.1 Spacing out</text><text x="256" y="431">Rule 5.2 Spacing out</text><text x="256" y="447">Rule 6.1 Spacing out</text><text x="256" y="464">Rule 6.2 Spacing out</text><text x="256" y="481">Rule 6.3 Spacing out</text><text x="256" y="498">Rule 7.1 Spacing out</text><text x="256" y="515">Rule 7.2 Spacing out</text><text x="256" y="532">Rule 8.1 Spacing</text><text x="256" y="549">Rule 8.2 Spacing</text>
      <text x="236" y="566" class="gr">Rules</text><text x="387" y="566" class="gr">107</text><text x="256" y="600">Rules with errors</text><text x="387" y="600">89</text><text x="236" y="616" class="gb">Summary</text><text x="216" y="660">Processing: Spacing</text>
    </g>
  </svg>
  </div>
  <div class="vscroll right"><svg viewBox="0 0 8 6"><path d="M.5 5L4 1.500 7.500 5"/></svg><i class="vthumb"></i><svg viewBox="0 0 8 6"><path d="M.5 1L4 4.500 7.500 1"/></svg></div>
  <div class="hscroll"><svg viewBox="0 0 6 8"><path d="M5 .5L1.500 4 5 7.500"/></svg><i class="hthumb"></i><svg viewBox="0 0 6 8"><path d="M1 .5L4.500 4 1 7.500"/></svg></div>
</section>
</main>

<footer class="status">
  <span class="msg">Select: Click and drag to select.</span><span class="items">0 items</span><span class="lay">M1:drawing</span><span class="xy">957.890, 1559.040</span><span class="xy">957.890, 1559.040</span><span class="unit">um</span>
  <svg viewBox="0 0 10 10"><path d="M8 2v1M8 5v1M5 5v1M8 8v1M5 8v1M2 8v1" stroke="#aaa" stroke-width="2"/></svg>
</footer>
</div>

<div class="fading" aria-hidden="true"><p>DRC Results</p><p>Loading: simulation 12,767s&nbsp; &nbsp;demo 2 drawing</p><p>errors</p>
<svg class="fadex" viewBox="0 0 96 10"><path d="M0 4.500h10M83 1l7 7M90 1l-7 7"/></svg></div>
<svg class="pointer" viewBox="0 0 14 20" aria-hidden="true"><path d="M1 1v15l3.500-3.500 3 6 2.500-1-3-6h5z" fill="#fff" stroke="#222"/></svg>
</body>
</html>
```
FILE: styles.css
```css
* { box-sizing: border-box; }
html, body { height: 100%; }
body { margin: 0; position: relative; overflow: hidden; background: #f0f0f0; color: #333; font: 12px/16px "Open Sans", "Noto Sans", sans-serif; }
button { padding: 0; border: 0; background: none; color: inherit; font: inherit; }
.defs { position: absolute; width: 0; height: 0; }
.window { display: flex; flex-direction: column; height: 100%; }

.titlebar { display: flex; align-items: center; flex: none; height: 30px; padding-left: 8px; background: #fff; }
.titlebar h1 { flex: 1; margin: 0; color: #929292; font-size: 12px; font-weight: 400; }
.titlebar .appicon { width: 16px; height: 16px; margin-right: 6px; }
.titlebar button { width: 45px; height: 28px; }
.titlebar button svg { width: 12px; height: 12px; fill: none; stroke: #777; }
.menubar { display: flex; gap: 11px; flex: none; height: 21px; padding: 0 7px; background: #fff; }
.menubar button { line-height: 22px; }

.toolbar { display: flex; align-items: center; flex: none; height: 27px; border-bottom: 1px solid #d4d4d4; background: #f1f1f1; }
.toolbar.tall { height: 28px; }
.toolbar button { width: 25px; height: 25px; }
.toolbar button svg { display: block; width: 24px; height: 24px; }
.toolbar .on { background: #b9d9f2; }
.toolbar .flip { transform: scaleX(-1); }
.toolbar .glyph { color: #1c2d68; font: bold 24px/25px "Liberation Serif", serif; }
.grip { width: 10px; height: 22px; flex: none; padding: 0 3px; border-left: 1px solid #ddd; background: radial-gradient(circle at 1px 1px, #ccc 1px, transparent 1px) 4px 0 / 3px 3px; background-clip: content-box; }
.grip:first-child { width: 8px; border-left: 0; }
.sep { width: 6px; height: 20px; flex: none; background: linear-gradient(#d8d8d8, #d8d8d8) center / 1px 100% no-repeat; }
.sep.wide { width: 10px; }
.layer { width: 134px; height: 19px; padding: 0 3px; border: 1px solid #adadad; border-radius: 0; appearance: none; color: #333; font: 11px "Open Sans", sans-serif; background: #e3e3e3 url("data:image/svg+xml,%3Csvg xmlns='http://www.w3.org/2000/svg' width='7' height='4'%3E%3Cpath d='M0 0h7L3.500 4z'/%3E%3C/svg%3E") right 4px center no-repeat; }
.i8 { font: bold 8px "Open Sans"; fill: #222; }
.i6 { font: bold 7px "Open Sans"; fill: #333; }
.em { font: 10px "Open Sans"; fill: #c21f2c; }
.em.b { font-weight: bold; }
.pin { font: 8px "Liberation Mono"; fill: #16207c; }
.sw0 { --a: #fff; --b: #d9d95e; }
.sw1 { --a: #d6d65c; --b: #1d4ce0; }
.sw2 { --a: #d6d65c; --b: #18a078; }
.sw3 { --a: #d6d65c; --b: #d92c50; }
.sw4 { --a: #d6d65c; --b: #6c2068; }
.sw5 { --a: #e8ecf4; --b: #1f56b8; }
.sw6 { --a: #e8e8f0; --b: #796cc4; }

.workspace { display: flex; flex: 1; min-height: 0; }
.dock { display: flex; flex-direction: column; width: 148px; flex: none; padding-right: 4px; }
.dockhead { display: flex; align-items: center; gap: 4px; height: 18px; margin-top: 1px; padding: 0 2px 0 4px; border: 1px solid #ccc; border-left: 0; background: #dcdcdc; }
.dockhead h2 { flex: 1; margin: 0; font-size: 11px; font-weight: 400; }
.dockhead button { display: flex; }
.dockhead svg { width: 9px; height: 9px; }
.dockicons { display: flex; gap: 14px; padding: 10px 0 0 8px; }
.dockicons button, .dockicons svg { display: block; width: 16px; height: 16px; }
.searchrow { display: flex; align-items: center; gap: 6px; margin-top: 9px; }
.searchrow input { width: 120px; height: 18px; padding: 0 3px; border: 1px solid #aaa; background: #fff; font: 11px "Open Sans", sans-serif; }
.searchrow input::placeholder { color: #8b8b8b; }
.searchrow svg { display: block; width: 12px; height: 14px; }
.libbox { display: flex; align-items: center; height: 18px; margin: 14px 0 0 1px; padding-right: 3px; border: 1px solid #aaa; background: #fff; }
.libbox select { flex: 1; min-width: 0; height: 16px; padding: 0 2px; border: 0; background: none; appearance: none; color: #333; font: 11px "Open Sans", sans-serif; }
.libbox svg { width: 8px; height: 6px; }
.partspane { display: flex; justify-content: space-between; flex: 1; min-height: 0; overflow: hidden; border: 1px solid #aaa; border-top: 0; }
.parts { display: grid; grid-template-columns: 36px 35px; grid-auto-rows: 31px; align-content: space-between; column-gap: 2px; height: 367px; }
.parts button { display: flex; flex-direction: column; align-items: center; height: 31px; border: 2px solid #d0d0d0; background: #fff linear-gradient(135deg, #111 3px, transparent 3px) 3px 1px / 6px 6px no-repeat; overflow: hidden; }
.parts b { padding-left: 5px; color: #3a35c0; font: bold 6px/7px "DejaVu Sans"; }
.parts svg { width: 24px; height: 12px; flex: none; fill: none; stroke: #444; }
.parts span { color: #333; font: 8px/8px "Liberation Sans", sans-serif; white-space: nowrap; }
.parts .m0 { fill: #e4fff1; stroke: #3bd586; stroke-width: 3px; }
.parts .m1 { fill: #fff; stroke: #d06884; stroke-width: 2px; }
.parts .m2 { stroke: #4757c8; }
.tabs { display: flex; height: 19px; flex: none; font-size: 11px; }
.tabs button { padding: 0 10px; height: 18px; }
.tabs button[aria-selected="true"] { padding: 0 11px; background: #fff; }

.view { display: grid; grid-template: 1fr 17px / 1fr 15px; flex: 1; min-width: 0; }
.canvas { background: #000; min-height: 0; min-width: 0; }
.board { display: block; width: 100%; height: 100%; }
.vscroll, .hscroll { display: flex; align-items: center; justify-content: space-between; }
.vscroll { flex-direction: column; width: 15px; padding: 5px 0; }
.vscroll svg { width: 8px; height: 6px; fill: none; stroke: #555; stroke-width: 1.5px; }
.hscroll svg { width: 6px; height: 8px; fill: none; stroke: #555; stroke-width: 1.5px; }
.partthumb { flex: 1; width: 14px; margin: 5px 0 60px; background: #cdcdcd; }
.vthumb { flex: 1; width: 14px; margin: 154px 0 149px; background: #cdcdcd; }
.hscroll { padding: 1px 5px 2px 4px; }
.hthumb { flex: 1; height: 14px; margin: 0 282px 0 387px; background: linear-gradient(90deg, #d3d3d3 352px, #c9c9c9 352px); }
.thin path { fill: none; stroke: #30bf3c; }
.thinred path { fill: none; stroke: #d0352d; }
.etch { fill: #3190a6; font: 11px "Liberation Mono", monospace; white-space: pre; }
.etch .lg { font-size: 13px; }
.ghost { fill: #000; fill-opacity: .3; font: 9px "Open Sans", sans-serif; }
.ghost .gb { font-weight: bold; font-size: 10px; fill-opacity: .8; }
.ghost .gr { fill: #4a0814; fill-opacity: .6; font-weight: bold; }

.status { display: flex; align-items: center; flex: none; height: 19px; }
.status .msg { flex: 1; padding-left: 5px; }
.status .items { width: 186px; padding-left: 4px; border-left: 1px solid #ddd; }
.status .lay { width: 70px; padding-right: 1px; text-align: right; color: #45d44f; font-size: 11px; }
.status .xy { width: 111px; padding-left: 7px; font-size: 11px; }
.status .unit { width: 30px; padding-left: 6px; font-size: 11px; }
.status svg { width: 10px; height: 10px; }

.fading { position: absolute; left: 194px; top: 105px; width: 703px; height: 108px; border: 1px solid #e8e8e8; border-width: 0 1px; color: #e2e2e2; font-size: 10px; pointer-events: none; }
.fading p { margin: 0; padding: 3px 14px; height: 27px; line-height: 18px; }
.fading p + p { padding-top: 9px; height: 22px; }
.fadex { position: absolute; right: 16px; top: 7px; width: 96px; height: 10px; fill: none; stroke: #d2d2d2; }
.pointer { position: absolute; left: 560px; top: 117px; width: 14px; height: 20px; pointer-events: none; }
```
